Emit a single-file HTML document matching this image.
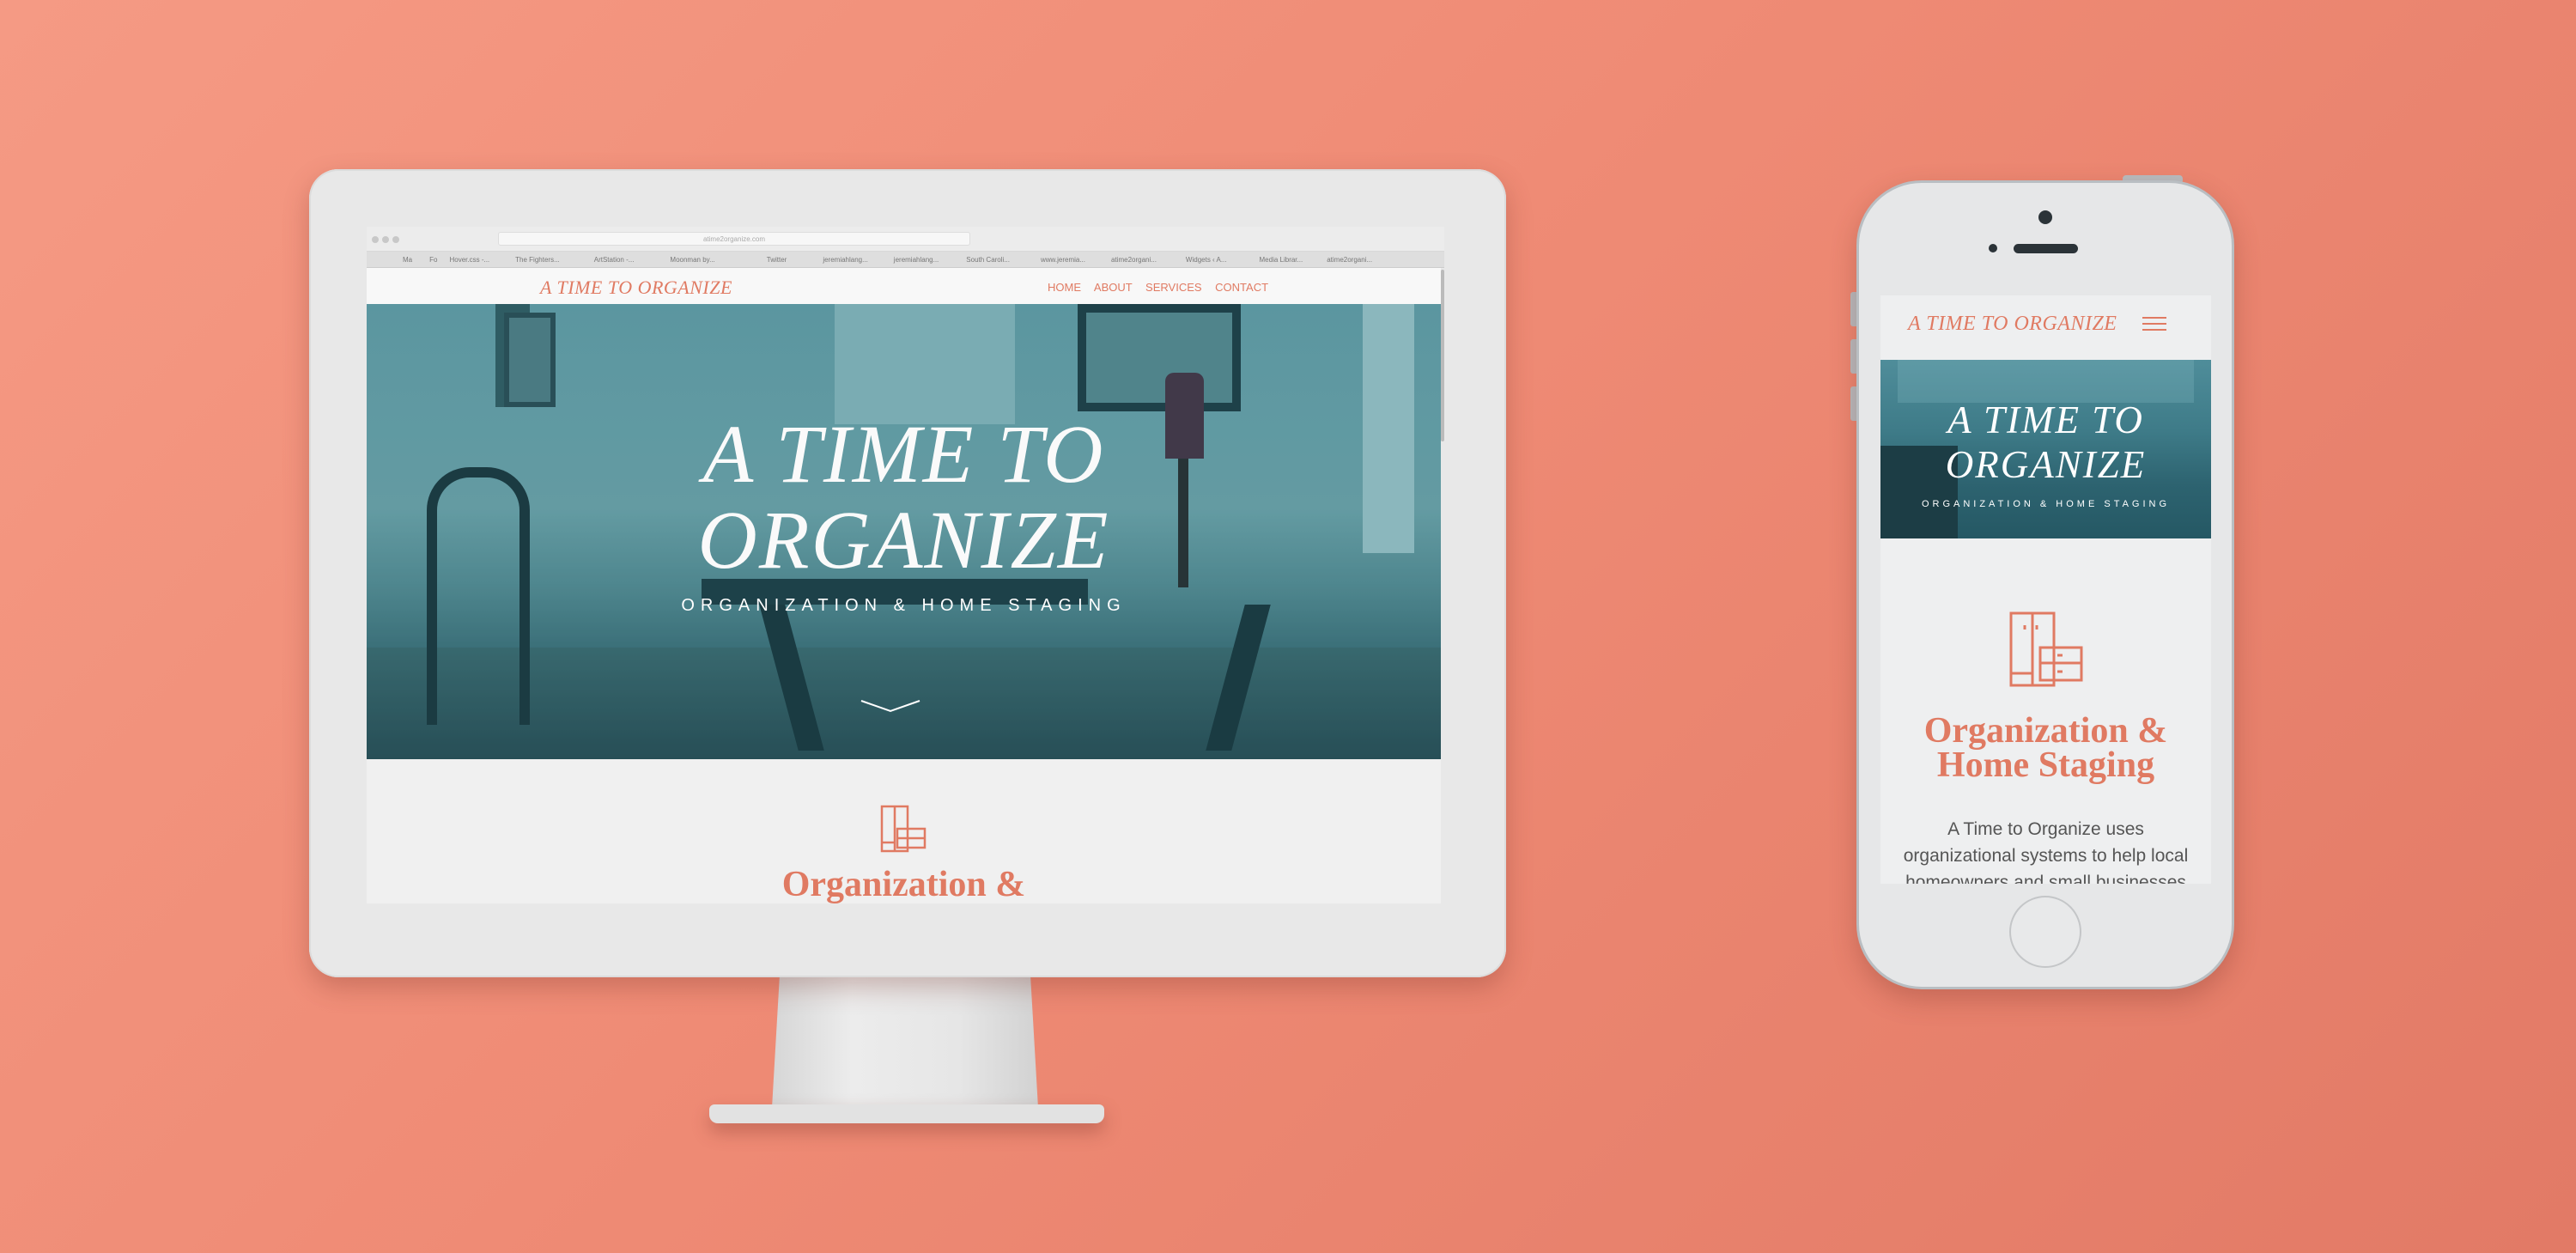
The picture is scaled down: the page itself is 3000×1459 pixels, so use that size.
<!DOCTYPE html>
<html><head><meta charset="utf-8"><style>
*{margin:0;padding:0;box-sizing:border-box}
body{width:3000px;height:1459px;overflow:hidden;position:relative;background:linear-gradient(135deg,#f59a84 0%,#ef8b75 45%,#e27a66 100%);font-family:"Liberation Sans",sans-serif}
.abs{position:absolute}
.serif{font-family:"Liberation Serif",serif}
</style></head><body>
<div class="abs" style="left:899px;top:1130px;width:310px;height:160px;background:linear-gradient(90deg,#d6d6d6,#ececec 30%,#e6e6e6 70%,#d2d2d2);clip-path:polygon(3% 0,97% 0,100% 100%,0 100%)"></div>
<div class="abs" style="left:826px;top:1286px;width:460px;height:22px;background:#e2e2e2;border-radius:6px 6px 10px 10px;box-shadow:0 10px 20px rgba(120,50,40,.35)"></div>
<div class="abs" style="left:360px;top:197px;width:1394px;height:941px;background:#e8e8e8;border-radius:34px;box-shadow:0 12px 30px rgba(120,50,40,.3),inset 0 0 0 2px #dcdcdc"></div>
<div class="abs" style="left:427px;top:264px;width:1255px;height:788px;background:#f0f0f0;overflow:hidden">
 <div class="abs" style="left:0;top:0;width:1255px;height:29px;background:#ececec;border-bottom:1px solid #d8d8d8"></div>
 <div class="abs" style="left:6px;top:11px;width:8px;height:8px;border-radius:50%;background:#c8c8c8;box-shadow:12px 0 #c8c8c8,24px 0 #c8c8c8"></div>
 <div class="abs" style="left:153px;top:6px;width:550px;height:16px;background:#f7f7f7;border:1px solid #ddd;border-radius:3px;font-size:8px;color:#aaa;text-align:center;line-height:15px">atime2organize.com</div>
 <div class="abs" style="left:0;top:29px;width:1255px;height:19px;background:#dedede;border-bottom:1px solid #ccc;font-size:8px;color:#777;line-height:19px;white-space:nowrap">
  <span style="margin-left:42px">Ma</span><span style="margin-left:20px">Fo</span><span style="margin-left:14px">Hover.css -...</span><span style="margin-left:30px">The Fighters...</span><span style="margin-left:40px">ArtStation -...</span><span style="margin-left:42px">Moonman by...</span><span style="margin-left:60px">Twitter</span><span style="margin-left:42px">jeremiahlang...</span><span style="margin-left:30px">jeremiahlang...</span><span style="margin-left:32px">South Caroli...</span><span style="margin-left:36px">www.jeremia...</span><span style="margin-left:30px">atime2organi...</span><span style="margin-left:34px">Widgets ‹ A...</span><span style="margin-left:38px">Media Librar...</span><span style="margin-left:28px">atime2organi...</span></div>
 <div class="abs" style="left:0;top:48px;width:1251px;height:42px;background:#f8f8f8"></div>
 <div class="abs serif" style="left:202px;top:58px;font-size:22px;font-style:italic;color:#e07a62;letter-spacing:.5px">A TIME TO ORGANIZE</div>
 <div class="abs" style="left:793px;top:63px;font-size:13px;color:#e07a62;word-spacing:12px">HOME ABOUT SERVICES CONTACT</div>
 <div class="abs" style="left:0;top:90px;width:1251px;height:530px;overflow:hidden;background:linear-gradient(180deg,#6aa2aa 0%,#74a8ad 45%,#5a8e94 62%,#3b6a72 80%,#2d555d 100%)">
  <div class="abs" style="left:150px;top:0;width:40px;height:120px;background:#345b60"></div>
  <div class="abs" style="left:160px;top:10px;width:60px;height:110px;background:#557f86;border:6px solid #2c4b51"></div>
  <div class="abs" style="left:545px;top:0;width:210px;height:140px;background:#8fbcc1"></div>
  <div class="abs" style="left:828px;top:0;width:190px;height:125px;border:10px solid #1f3a40;background:#5c8b91"></div>
  <div class="abs" style="left:1160px;top:0;width:60px;height:290px;background:#a4cace"></div>
  <div class="abs" style="left:0;top:400px;width:1251px;height:130px;background:linear-gradient(180deg,#3f6a6e,#2a4a50)"></div>
  <div class="abs" style="left:70px;top:190px;width:120px;height:300px;border:12px solid #1b3338;border-radius:50px 50px 0 0;border-bottom:none"></div>
  <div class="abs" style="left:390px;top:320px;width:450px;height:30px;background:#1e3a40"></div>
  <div class="abs" style="left:480px;top:350px;width:30px;height:170px;background:#1a3338;transform:skewX(15deg)"></div>
  <div class="abs" style="left:1000px;top:350px;width:30px;height:170px;background:#1a3338;transform:skewX(-15deg)"></div>
  <div class="abs" style="left:930px;top:80px;width:45px;height:100px;background:#4a3040;border-radius:10px 10px 0 0"></div>
  <div class="abs" style="left:945px;top:180px;width:12px;height:150px;background:#2a2a2a"></div>
  <div class="abs" style="left:0;top:0;width:1251px;height:530px;background:rgba(30,100,115,.18)"></div>
  <div class="abs serif" style="left:0;top:125px;width:1251px;text-align:center;font-size:96px;line-height:100px;font-style:italic;color:#fafafa;letter-spacing:2px">A TIME TO<br>ORGANIZE</div>
  <div class="abs" style="left:0;top:340px;width:1251px;text-align:center;font-size:20px;color:#fff;letter-spacing:7px">ORGANIZATION &amp; HOME STAGING</div>
  <svg class="abs" style="left:575px;top:460px" width="70" height="20"><path d="M1 2 L35 14 L69 2" stroke="#fff" stroke-width="2" fill="none"/></svg>
 </div>
 <div class="abs" style="left:1251px;top:48px;width:4px;height:740px;background:#e8e8e8"></div>
 <div class="abs" style="left:1251px;top:50px;width:4px;height:200px;background:#bbb;border-radius:2px"></div>
 <svg class="abs" style="left:598px;top:673px" width="54" height="56" viewBox="0 0 54 56" fill="none" stroke="#e07a62" stroke-width="2.5"><rect x="2" y="2" width="30" height="52"/><line x1="17" y1="2" x2="17" y2="54"/><line x1="2" y1="44" x2="17" y2="44"/><rect x="20" y="28" width="32" height="22"/><line x1="20" y1="39" x2="52" y2="39"/></svg>
 <div class="abs serif" style="left:0;top:742px;width:1251px;text-align:center;font-size:42px;font-weight:bold;color:#e07a62">Organization &amp;</div>
</div>
<div class="abs" style="left:2472px;top:204px;width:70px;height:10px;background:#b8bcbf;border-radius:4px"></div>
<div class="abs" style="left:2155px;top:340px;width:10px;height:40px;background:#b8bcbf;border-radius:3px"></div>
<div class="abs" style="left:2155px;top:395px;width:10px;height:40px;background:#b8bcbf;border-radius:3px"></div>
<div class="abs" style="left:2155px;top:450px;width:10px;height:40px;background:#b8bcbf;border-radius:3px"></div>
<div class="abs" style="left:2162px;top:210px;width:440px;height:942px;background:#e6e7e8;border-radius:76px;border:3px solid #b9bec2;box-shadow:0 12px 30px rgba(120,50,40,.3)"></div>
<div class="abs" style="left:2374px;top:245px;width:16px;height:16px;border-radius:50%;background:#2b3338"></div>
<div class="abs" style="left:2316px;top:284px;width:10px;height:10px;border-radius:50%;background:#2b3338"></div>
<div class="abs" style="left:2345px;top:284px;width:75px;height:11px;border-radius:6px;background:#2b3338"></div>
<div class="abs" style="left:2340px;top:1043px;width:84px;height:84px;border-radius:50%;border:2px solid #c4c6c8;background:#e8e9ea"></div>
<div class="abs" style="left:2190px;top:344px;width:385px;height:685px;background:#eeeff0;overflow:hidden">
 <div class="abs serif" style="left:32px;top:20px;font-size:24px;font-style:italic;color:#e07a62;letter-spacing:.5px">A TIME TO ORGANIZE</div>
 <div class="abs" style="left:305px;top:25px;width:28px;height:2px;background:#e07a62;box-shadow:0 7px #e07a62,0 14px #e07a62"></div>
 <div class="abs" style="left:0;top:75px;width:385px;height:208px;overflow:hidden;background:linear-gradient(180deg,#4f8d9a 0%,#3e7b88 40%,#2d6370 70%,#255864 100%)">
  <div class="abs" style="left:0;top:100px;width:90px;height:108px;background:#1c3d45"></div>
  <div class="abs" style="left:20px;top:0;width:345px;height:50px;background:rgba(140,190,200,.25)"></div>
  <div class="abs serif" style="left:0;top:44px;width:385px;text-align:center;font-size:45px;line-height:52px;font-style:italic;color:#fff;letter-spacing:2px">A TIME TO<br>ORGANIZE</div>
  <div class="abs" style="left:0;top:162px;width:385px;text-align:center;font-size:11px;color:#fff;letter-spacing:4px">ORGANIZATION &amp; HOME STAGING</div>
 </div>
 <svg class="abs" style="left:150px;top:368px" width="86" height="88" viewBox="0 0 86 88" fill="none" stroke="#e07a62" stroke-width="3"><rect x="2" y="2" width="50" height="84"/><line x1="27" y1="2" x2="27" y2="86"/><line x1="2" y1="72" x2="27" y2="72"/><rect x="36" y="42" width="48" height="38"/><line x1="36" y1="60" x2="84" y2="60"/><line x1="18" y1="16" x2="18" y2="21"/><line x1="32" y1="16" x2="32" y2="21"/><line x1="56" y1="51" x2="62" y2="51"/><line x1="56" y1="70" x2="62" y2="70"/></svg>
 <div class="abs serif" style="left:0;top:487px;width:385px;text-align:center;font-size:42px;line-height:40px;font-weight:bold;color:#e07a62">Organization &amp;<br>Home Staging</div>
 <div class="abs" style="left:0;top:606px;width:385px;text-align:center;font-size:21px;line-height:31px;color:#555">A Time to Organize uses<br>organizational systems to help local<br>homeowners and small businesses</div>
</div>
</body></html>
